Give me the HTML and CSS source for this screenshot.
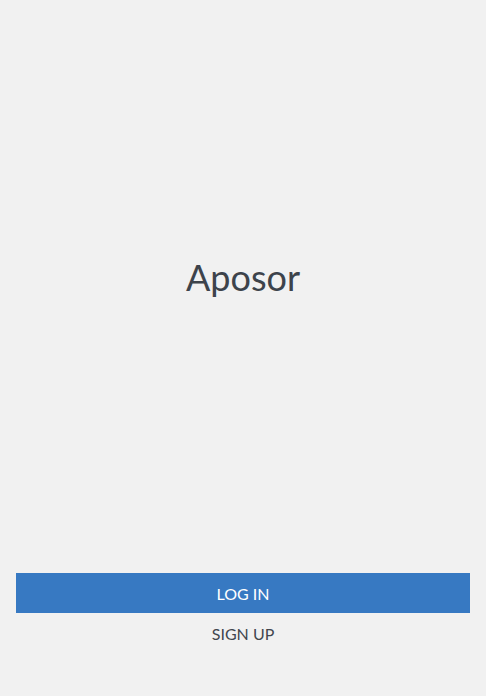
FILE: index.html
```html
<!DOCTYPE html>
<html>
<head>
<meta charset="utf-8">
<link rel="stylesheet" href="styles.css">
</head>
<body>
<div class="screen">
  <div class="hero"><h1 class="title">Aposor</h1></div>
  <div class="actions">
    <button class="btn-login">LOG IN</button>
    <button class="btn-signup">SIGN UP</button>
  </div>
</div>
</body>
</html>
```
FILE: styles.css
```css
html, body {
  margin: 0;
  padding: 0;
  height: 100%;
  background: #f1f1f1;
  font-family: Lato, "Open Sans", sans-serif;
}
.screen {
  height: 696px;
  display: flex;
  flex-direction: column;
}
.hero {
  flex: 1;
  display: flex;
  align-items: center;
  justify-content: center;
  padding-bottom: 20px;
}
.title {
  margin: 0;
  font-size: 36px;
  font-weight: 400;
  color: #3d434b;
}
.actions {
  display: flex;
  flex-direction: column;
  padding: 0 16px 43px;
}
.btn-login {
  height: 40px;
  border: none;
  background: #3779c2;
  color: #fff;
  font-family: inherit;
  font-size: 16px;
  padding: 0;
}
.btn-signup {
  height: 40px;
  border: none;
  background: transparent;
  color: #41464e;
  font-family: inherit;
  font-size: 16px;
  padding: 0;
}
```
